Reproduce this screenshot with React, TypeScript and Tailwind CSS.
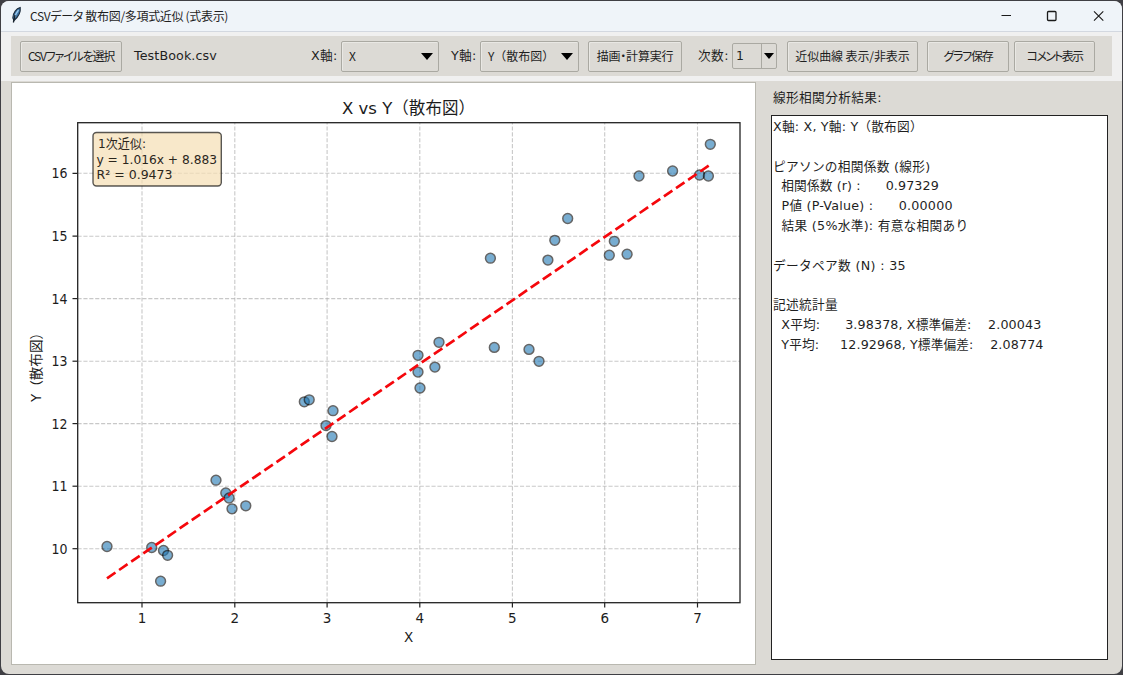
import type { ReactNode } from 'react';
import clsx from 'clsx';

const POINTS = [
	[107, 546.5], [151.7, 547.5], [163.5, 550.5], [167.6, 555.3], [160.6, 581.2],
	[216, 480.2], [225.8, 493], [229.1, 498], [232, 508.8], [245.8, 505.8],
	[304.3, 401.8], [309.2, 399.8], [333, 410.7], [326, 425.6], [332, 436.5],
	[418, 355.3], [439, 342.3], [434.9, 367.1], [418, 372.1], [420, 388],
	[490.4, 258.2], [494.3, 347.4], [529, 349.4], [539, 361.3], [547.9, 260.1],
	[554.8, 240.3], [567.7, 218.5], [609.3, 255.2], [614.3, 241.3], [627.1, 254.2],
	[639, 176], [672.6, 171], [699.6, 175], [708.4, 176], [710.3, 144.3],
];

const X_TICKS = [
	{ label: '1', pos: 142 },
	{ label: '2', pos: 234.8 },
	{ label: '3', pos: 327.1 },
	{ label: '4', pos: 419.8 },
	{ label: '5', pos: 512.4 },
	{ label: '6', pos: 604.7 },
	{ label: '7', pos: 697.5 },
];

const Y_TICKS = [
	{ label: '16', pos: 173.3 },
	{ label: '15', pos: 236.2 },
	{ label: '14', pos: 298.6 },
	{ label: '13', pos: 361.2 },
	{ label: '12', pos: 423.6 },
	{ label: '11', pos: 486.2 },
	{ label: '10', pos: 548.7 },
];

const RESULT_LINES = [
	{ text: 'X軸: X, Y軸: Y（散布図）', className: 'tracking-[0.2px]' },
	{ text: '', className: '' },
	{ text: 'ピアソンの相関係数 (線形)', className: 'tracking-[0.28px]' },
	{ text: '  相関係数 (r) :      0.97329', className: 'tracking-[0.12px]' },
	{ text: '  P値 (P-Value) :      0.00000', className: 'tracking-[0.22px]' },
	{ text: '  結果 (5%水準): 有意な相関あり', className: 'tracking-[0.27px]' },
	{ text: '', className: '' },
	{ text: 'データペア数 (N) : 35', className: 'tracking-[0.33px]' },
	{ text: '', className: '' },
	{ text: '記述統計量', className: 'tracking-[0.33px]' },
	{ text: '  X平均:      3.98378, X標準偏差:    2.00043', className: 'tracking-[0.13px]' },
	{ text: '  Y平均:     12.92968, Y標準偏差:    2.08774', className: 'tracking-[0.13px]' },
];

function ToolButton({ className, children }: { className?: string; children: ReactNode }) {
	return (
		<button
			className={clsx(
				'flex h-[31px] shrink-0 items-center justify-center rounded-[2px] border border-[#aaa9a2] bg-[#dcdad5] text-[12px] whitespace-nowrap shadow-[inset_1px_1px_0_#e9e8e4]',
				className,
			)}
		>
			{children}
		</button>
	);
}

function Arrow({ className }: { className?: string }) {
	return (
		<svg className={className} viewBox="0 0 12 7" preserveAspectRatio="none" fill="#000">
			<path d="M0 0H12L6 7Z" />
		</svg>
	);
}

function ComboBox({ className, children }: { className?: string; children: ReactNode }) {
	return (
		<div
			className={clsx(
				'flex h-[31px] shrink-0 items-center justify-between rounded-[2px] border border-[#aaa9a2] pr-[5px] pl-[7px] text-[12px] whitespace-nowrap shadow-[inset_1px_1px_0_#e9e8e4]',
				className,
			)}
		>
			<span>{children}</span>
			<Arrow className="h-[7px] w-3 shrink-0" />
		</div>
	);
}

function Label({ className, children }: { className?: string; children: ReactNode }) {
	return (
		<span
			className={clsx(
				"shrink-0 font-['DejaVu_Sans','Noto_Sans_CJK_JP',sans-serif] text-[12.7px] leading-5 whitespace-nowrap",
				className,
			)}
		>
			{children}
		</span>
	);
}

function Chart() {
	return (
		<svg
			viewBox="12 83 743 581"
			className="block h-[581px] w-[743px] font-['DejaVu_Sans','Noto_Sans_CJK_JP',sans-serif]"
		>
			<g stroke="#b0b0b0" strokeOpacity="0.7" strokeWidth="1.1" strokeDasharray="4.1 1.8">
				{X_TICKS.map((t) => (
					<path key={t.label} d={`M${t.pos} 602.5V122.5`} />
				))}
				{Y_TICKS.map((t) => (
					<path key={t.label} d={`M77.5 ${t.pos}H740`} />
				))}
			</g>
			<g fill="#1f77b4" stroke="#000" strokeWidth="1.5">
				{POINTS.map(([x, y], i) => (
					<circle key={i} cx={x} cy={y} r="4.9" opacity="0.6" />
				))}
			</g>
			<path
				d="M107 578.3L710 164.8"
				stroke="#f5070c"
				strokeWidth="2.7"
				strokeDasharray="10.25 4.43"
			/>
			<rect x="77.7" y="122.7" width="662.3" height="480" fill="none" stroke="#222" strokeWidth="1.3" />
			<g stroke="#222" strokeWidth="1.2">
				{X_TICKS.map((t) => (
					<path key={t.label} d={`M${t.pos} 603V607.5`} />
				))}
				{Y_TICKS.map((t) => (
					<path key={t.label} d={`M72.5 ${t.pos}H77`} />
				))}
			</g>
			<g fill="#1c1c1c" fontSize="13.5">
				{X_TICKS.map((t) => (
					<text key={t.label} x={t.pos} y="623" textAnchor="middle">
						{t.label}
					</text>
				))}
				{Y_TICKS.map((t) => (
					<text key={t.label} x="67.5" y={t.pos + 5} textAnchor="end" textLength="16" lengthAdjust="spacingAndGlyphs">
						{t.label}
					</text>
				))}
				<text x="408.5" y="642" textAnchor="middle">
					X
				</text>
				<text transform="translate(41 402) rotate(-90)" textLength="76" lengthAdjust="spacingAndGlyphs">
					Y（散布図）
				</text>
				<text x="342" y="113.5" fontSize="16.5" textLength="133" lengthAdjust="spacingAndGlyphs">
					X vs Y（散布図）
				</text>
			</g>
			<rect
				x="93"
				y="132.5"
				width="128.3"
				height="53.5"
				rx="3.5"
				fill="#f5deb3"
				fillOpacity="0.7"
				stroke="#000"
				strokeOpacity="0.65"
				strokeWidth="1.4"
			/>
			<g fill="#2b261c" fontSize="13">
				<text x="98" y="148" textLength="48" lengthAdjust="spacingAndGlyphs">
					1次近似:
				</text>
				<text x="96.5" y="163.5" textLength="120.5" lengthAdjust="spacingAndGlyphs">
					y = 1.016x + 8.883
				</text>
				<text x="96.5" y="179" textLength="76" lengthAdjust="spacingAndGlyphs">
					R² = 0.9473
				</text>
			</g>
		</svg>
	);
}

export default function App() {
	return (
		<div className="h-[675px] w-[1123px] overflow-hidden bg-[#3f3f44] p-px font-['Noto_Sans_CJK_JP',sans-serif] text-[#1f1f1f]">
			<div className="flex h-full flex-col overflow-hidden rounded-lg bg-[#dcdad5]">
				<header className="flex h-[31px] shrink-0 items-center justify-between border-b border-[#d3d8e0] bg-[#eff4f9]">
					<div className="flex items-center pl-2">
						<svg viewBox="0 0 14 18" className="mr-[7px] mb-[3px] h-[18px] w-[14px]">
							<path d="M11.2 1.5C7.500 2.500 4 6.500 3.800 12L5 14.500C8.500 11.500 12 6.500 11.200 1.500Z" fill="#3c74a8" stroke="#1d2c3c" strokeWidth="1.1" />
							<path d="M9.500 4C8 6 6.300 9 5.400 11.500" stroke="#9cc9ea" strokeWidth="1.3" fill="none" />
							<path d="M6 9L4.400 16.500" stroke="#16202b" strokeWidth="1.3" />
						</svg>
						<h1 className="text-[12px] tracking-[-0.32px] whitespace-nowrap [font-feature-settings:'palt']">
							CSVデータ&nbsp;散布図/多項式近似 (式表示)
						</h1>
					</div>
					<svg viewBox="0 0 104 12" className="mr-[18px] h-3 w-[104px]" fill="none" stroke="#1a1a1a" strokeWidth="1.1">
						<path d="M1.500 5.500H11" />
						<rect x="47.500" y="1.500" width="8.500" height="9" rx="1" strokeWidth="1.300" />
						<path d="M94 1.300L103.300 10.700M103.300 1.300L94 10.700" />
					</svg>
				</header>
				<div className="shrink-0 bg-[#f0f0f0] px-[10px] pt-1 pb-[5px]">
					<div className="flex h-10 items-center bg-[#dcdad5] pl-[9px]">
						<ToolButton className="w-[102px] tracking-[-1.2px] [font-feature-settings:'palt']">
							CSVファイルを選択
						</ToolButton>
						<Label className="ml-3 w-[177px] tracking-[0.1px]">TestBook.csv</Label>
						<Label className="w-[30px] tracking-[0.3px]">X軸:</Label>
						<ComboBox className="w-[98px]">X</ComboBox>
						<Label className="ml-3 w-[29px] tracking-[0.3px]">Y軸:</Label>
						<ComboBox className="w-[99px]">Y（散布図）</ComboBox>
						<ToolButton className="ml-[9px] w-[94px] tracking-[-0.2px] [font-feature-settings:'palt']">
							描画・計算実行
						</ToolButton>
						<Label className="ml-4 w-[34px] tracking-[0.4px]">次数:</Label>
						<div className="flex h-[26px] w-[45px] shrink-0 rounded-[2px] border border-[#aaa9a2]">
							<span className="flex-1 pl-[3px] font-['DejaVu_Sans',sans-serif] text-[12.5px] leading-6">1</span>
							<span className="flex w-[15px] items-center justify-center border-l border-[#aaa9a2]">
								<Arrow className="h-[6px] w-[10px]" />
							</span>
						</div>
						<ToolButton className="ml-[10px] w-[131px] tracking-[-0.1px]">近似曲線 表示/非表示</ToolButton>
						<ToolButton className="ml-[9px] w-[82px] tracking-[-1.2px] [font-feature-settings:'palt']">
							グラフ保存
						</ToolButton>
						<ToolButton className="ml-[5px] w-[81px] tracking-[-1.7px] [font-feature-settings:'palt']">
							コメント表示
						</ToolButton>
					</div>
				</div>
				<main className="flex min-h-0 flex-1 pt-px pl-[10px]">
					<section className="h-[583px] w-[745px] shrink-0 border border-[#b9b8b0] bg-white">
						<Chart />
					</section>
					<aside className="ml-[15px] w-[337px] shrink-0">
						<h2 className="h-[33px] pl-[2px] font-['DejaVu_Sans','Noto_Sans_CJK_JP',sans-serif] text-[12.7px] leading-[31px] tracking-[0.35px]">
							線形相関分析結果:
						</h2>
						<div className="h-[545px] border border-[#222] bg-white pt-px pl-px font-['DejaVu_Sans','Noto_Sans_CJK_JP',sans-serif] text-[12.7px]">
							{RESULT_LINES.map((line, i) => (
								<p key={i} className={clsx('h-[19.8px] leading-[19.8px] whitespace-pre', line.className)}>
									{line.text}
								</p>
							))}
						</div>
					</aside>
				</main>
			</div>
		</div>
	);
}
